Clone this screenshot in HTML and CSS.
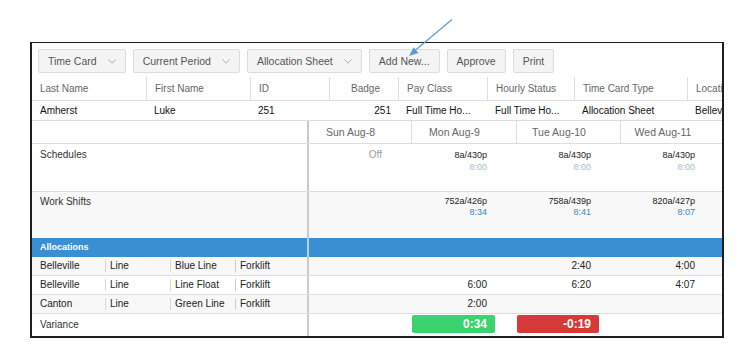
FILE: index.html
```html
<!DOCTYPE html>
<html>
<head>
<meta charset="utf-8">
<link rel="stylesheet" href="styles.css">
</head>
<body>
<div class="frame">
  <div class="toolbar">
    <button class="btn">Time Card<svg class="chev" width="8" height="5" viewBox="0 0 8 5"><polyline points="0.5,0.5 4,4.2 7.5,0.5"/></svg></button>
    <button class="btn">Current Period<svg class="chev" width="8" height="5" viewBox="0 0 8 5"><polyline points="0.5,0.5 4,4.2 7.5,0.5"/></svg></button>
    <button class="btn">Allocation Sheet<svg class="chev" width="8" height="5" viewBox="0 0 8 5"><polyline points="0.5,0.5 4,4.2 7.5,0.5"/></svg></button>
    <button class="btn">Add New...</button>
    <button class="btn">Approve</button>
    <button class="btn">Print</button>
  </div>
  <div class="clip">
    <div class="emp emp-head">
      <div class="ec">Last Name</div>
      <div class="ec sep">First Name</div>
      <div class="ec sep">ID</div>
      <div class="ec sep badge-h">Badge</div>
      <div class="ec sep">Pay Class</div>
      <div class="ec sep">Hourly Status</div>
      <div class="ec sep">Time Card Type</div>
      <div class="ec sep">Location</div>
    </div>
    <div class="emp emp-data">
      <div class="ec">Amherst</div>
      <div class="ec">Luke</div>
      <div class="ec">251</div>
      <div class="ec badge-d">251</div>
      <div class="ec">Full Time Ho...</div>
      <div class="ec">Full Time Ho...</div>
      <div class="ec">Allocation Sheet</div>
      <div class="ec">Belleville</div>
    </div>

    <div class="row day-head">
      <div class="lbl"></div>
      <div class="day">Sun Aug-8</div>
      <div class="day">Mon Aug-9</div>
      <div class="day">Tue Aug-10</div>
      <div class="day">Wed Aug-11</div>
    </div>

    <div class="row sched">
      <div class="lbl">Schedules</div>
      <div class="val"><div class="off">Off</div></div>
      <div class="val"><div>8a/430p</div><div class="hrs-s">8:00</div></div>
      <div class="val"><div>8a/430p</div><div class="hrs-s">8:00</div></div>
      <div class="val"><div>8a/430p</div><div class="hrs-s">8:00</div></div>
    </div>

    <div class="row work">
      <div class="lbl">Work Shifts</div>
      <div class="val"></div>
      <div class="val"><div>752a/426p</div><div class="hrs-w">8:34</div></div>
      <div class="val"><div>758a/439p</div><div class="hrs-w">8:41</div></div>
      <div class="val"><div>820a/427p</div><div class="hrs-w">8:07</div></div>
    </div>

    <div class="row alloc-head">
      <div class="lbl">Allocations</div>
      <div class="fill"></div>
    </div>

    <div class="row alloc shade">
      <div class="lbl subs"><span class="s s1">Belleville</span><span class="s s2">Line</span><span class="s s3">Blue Line</span><span class="s s4">Forklift</span></div>
      <div class="num"></div>
      <div class="num"></div>
      <div class="num">2:40</div>
      <div class="num">4:00</div>
    </div>
    <div class="row alloc">
      <div class="lbl subs"><span class="s s1">Belleville</span><span class="s s2">Line</span><span class="s s3">Line Float</span><span class="s s4">Forklift</span></div>
      <div class="num"></div>
      <div class="num">6:00</div>
      <div class="num">6:20</div>
      <div class="num">4:07</div>
    </div>
    <div class="row alloc shade">
      <div class="lbl subs"><span class="s s1">Canton</span><span class="s s2">Line</span><span class="s s3">Green Line</span><span class="s s4">Forklift</span></div>
      <div class="num"></div>
      <div class="num">2:00</div>
      <div class="num"></div>
      <div class="num"></div>
    </div>
    <div class="row variance">
      <div class="lbl">Variance</div>
      <div class="vc"></div>
      <div class="vc"><span class="vbox pos">0:34</span></div>
      <div class="vc"><span class="vbox neg">-0:19</span></div>
      <div class="vc"></div>
    </div>
  </div>
</div>
<svg class="arrow" width="749" height="80" viewBox="0 0 749 80">
  <line x1="452" y1="19.5" x2="415" y2="50.5" stroke="#5b9bd5" stroke-width="1.2"/>
  <polygon points="409,56 418.4,52.9 413.6,47.3" fill="#5b9bd5"/>
</svg>
</body>
</html>
```

FILE: styles.css
```css
* { box-sizing: border-box; }
html, body { margin: 0; padding: 0; background: #fff; }
body {
  position: relative;
  font-family: "Liberation Sans", Arial, sans-serif;
  font-size: 10px;
  color: #222;
}

.frame {
  margin: 42px 0 0 30px;
  width: 694px;
  border: 2px solid #1e1e1e;
  border-top-width: 1px;
  background: #fff;
}

.toolbar {
  display: flex;
  gap: 7px;
  padding: 6px 6px 4px 6px;
}
.btn {
  display: flex;
  align-items: center;
  height: 24px;
  padding: 0 9px;
  background: #f4f4f4;
  border: 1px solid #dcdcdc;
  border-radius: 2px;
  font-family: "Liberation Sans", Arial, sans-serif;
  font-size: 10.5px;
  color: #555;
  cursor: pointer;
}
.chev { margin-left: 11px; }
.chev polyline { fill: none; stroke: #b0b0b0; stroke-width: 1; }

.clip { overflow: hidden; width: 690px; }

.emp {
  display: grid;
  grid-template-columns: 114px 104px 79px 69px 89px 87px 113px 100px;
  width: 755px;
  border-bottom: 1px solid #dedede;
}
.ec {
  padding-left: 8px;
  white-space: nowrap;
  overflow: hidden;
}
.emp-head { height: 24px; }
.emp-head .ec { line-height: 23px; color: #666; }
.emp-head .sep { border-left: 1px solid #e0e0e0; }
.emp-head .badge-h { text-align: right; padding-right: 18px; }
.emp-data { height: 20px; }
.emp-data .ec { line-height: 19px; color: #111; }
.emp-data .badge-d { text-align: right; padding-right: 7px; }

.row {
  display: grid;
  grid-template-columns: 277px 103px 105px 104px 104px;
  width: 693px;
}
.lbl {
  border-right: 2px solid #c9c9c9;
  padding-left: 8px;
  color: #333;
}

.day-head { height: 23px; border-bottom: 1px solid #dedede; }
.day {
  border-right: 1px solid #e0e0e0;
  text-align: center;
  padding-right: 19px;
  line-height: 22px;
  font-size: 10.5px;
  color: #666;
}

.val {
  text-align: right;
  padding-right: 30px;
  font-size: 9px;
  color: #1a1a1a;
}
.sched { height: 48px; border-bottom: 1px solid #dedede; background: #fff; }
.sched .lbl { padding-top: 5px; line-height: 12px; }
.sched .val { padding-top: 5px; line-height: 12px; }
.off { color: #999; font-size: 10px; }
.hrs-s { color: #a8bdd3; }

.work { height: 46px; background: #f8f8f8; }
.work .lbl { padding-top: 4px; line-height: 12px; }
.work .val { padding-top: 4px; line-height: 11px; }
.hrs-w { color: #3a86c8; }

.alloc-head { height: 19px; background: #3a8fd2; }
.alloc-head .lbl {
  color: #fff;
  font-weight: bold;
  font-size: 9px;
  line-height: 19px;
  border-right-color: #b9cfe3;
}

.alloc { height: 19px; border-bottom: 1px solid #dedede; background: #fff; }
.alloc.shade { background: #f8f8f8; }
.subs { display: flex; align-items: center; padding-left: 0; }
.s {
  display: block;
  line-height: 12px;
  color: #222;
  white-space: nowrap;
}
.s1 { width: 73px; padding-left: 8px; }
.s2, .s3, .s4 { padding-left: 4px; border-left: 1px solid #d6d6d6; }
.s2, .s3 { width: 65px; }
.s4 { border-left-color: #d2c8c4; }
.num {
  text-align: right;
  padding-right: 30px;
  line-height: 18px;
  color: #222;
}

.variance { height: 22px; background: #fff; }
.variance .lbl { line-height: 22px; }
.vc { padding: 1px 22px 0 0; }
.vbox {
  display: block;
  height: 18px;
  line-height: 18px;
  text-align: right;
  padding-right: 8px;
  border-radius: 2px;
  color: #fff;
  font-weight: bold;
  font-size: 12px;
}
.pos { background: #3ad370; }
.neg { background: #d53939; }

.arrow {
  position: absolute;
  left: 0;
  top: 0;
  pointer-events: none;
}
```
